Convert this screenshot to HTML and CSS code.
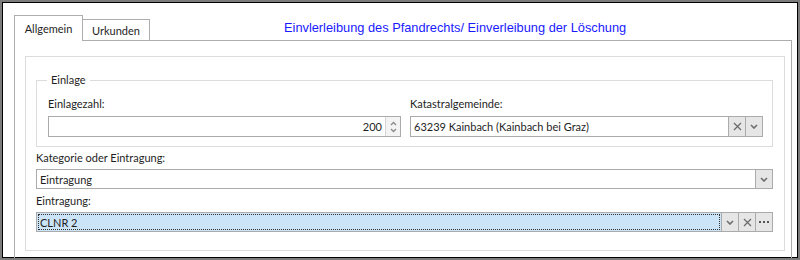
FILE: index.html
```html
<!doctype html>
<html lang="de">
  <head>
    <meta charset="UTF-8" />
    <title>Einverleibung</title>
    <link rel="stylesheet" href="styles.css">
  </head>
  <body>
    <div class="window">
      <div class="frame">
        <div class="tab-strip">
          <div class="tab tab-active">Allgemein</div>
          <div class="tab">Urkunden</div>
          <div class="title">Einvlerleibung des Pfandrechts/ Einverleibung der Löschung</div>
        </div>

        <div class="tab-page">
          <div class="panel">
            <fieldset class="group">
              <legend>Einlage</legend>
              <div class="group-row">
                <div class="field">
                  <label class="label">Einlagezahl:</label>
                  <div class="box">
                    <div class="box-text box-number">200</div>
                    <div class="spin">
                      <svg width="7" height="5" viewBox="0 0 7 5"><path d="M1 4 L3.5 1.5 L6 4" fill="none" stroke="#8a8a8a" stroke-width="1.3"/></svg>
                      <svg width="7" height="5" viewBox="0 0 7 5"><path d="M1 1 L3.5 3.5 L6 1" fill="none" stroke="#8a8a8a" stroke-width="1.3"/></svg>
                    </div>
                  </div>
                </div>
                <div class="field">
                  <label class="label">Katastralgemeinde:</label>
                  <div class="box">
                    <div class="box-text">63239 Kainbach (Kainbach bei Graz)</div>
                    <div class="btn">
                      <svg width="9" height="9" viewBox="0 0 9 9"><path d="M1 1 L8 8 M8 1 L1 8" stroke="#6d6d6d" stroke-width="1.3"/></svg>
                    </div>
                    <div class="btn">
                      <svg width="8" height="5" viewBox="0 0 8 5"><path d="M1 1 L4 4 L7 1" fill="none" stroke="#6d6d6d" stroke-width="1.6"/></svg>
                    </div>
                  </div>
                </div>
              </div>
            </fieldset>

            <label class="label label-wide">Kategorie oder Eintragung:</label>
            <div class="box box-combo">
              <div class="box-text">Eintragung</div>
              <div class="btn">
                <svg width="8" height="5" viewBox="0 0 8 5"><path d="M1 1 L4 4 L7 1" fill="none" stroke="#6d6d6d" stroke-width="1.6"/></svg>
              </div>
            </div>

            <label class="label label-wide">Eintragung:</label>
            <div class="box box-combo box-focus">
              <div class="box-text"><span class="focus-rect">CLNR 2</span></div>
              <div class="btn">
                <svg width="8" height="5" viewBox="0 0 8 5"><path d="M1 1 L4 4 L7 1" fill="none" stroke="#6d6d6d" stroke-width="1.6"/></svg>
              </div>
              <div class="btn">
                <svg width="9" height="9" viewBox="0 0 9 9"><path d="M1 1 L8 8 M8 1 L1 8" stroke="#6d6d6d" stroke-width="1.3"/></svg>
              </div>
              <div class="btn">
                <svg width="10" height="3" viewBox="0 0 10 3"><rect x="0" y="0" width="2" height="2" fill="#555"/><rect x="4" y="0" width="2" height="2" fill="#555"/><rect x="8" y="0" width="2" height="2" fill="#555"/></svg>
              </div>
            </div>
          </div>
        </div>
      </div>
    </div>
  </body>
</html>
```

FILE: styles.css
```css
body {
  margin: 0;
  background: #ffffff;
  font-family: Lato, "Open Sans", sans-serif;
  font-size: 11px;
  color: #1e1e1e;
}
.window {
  width: 800px;
  height: 260px;
  box-sizing: border-box;
  border: 2px solid #7c7c7c;
  overflow: hidden;
}
.frame {
  height: 100%;
  box-sizing: border-box;
  border: 1px solid #000000;
  background: #ffffff;
}

/* tab header */
.tab-strip {
  display: flex;
  align-items: flex-end;
  height: 37px;
  padding-left: 11px;
}
.tab {
  width: 66px;
  height: 20px;
  border: 1px solid #adadad;
  border-bottom: none;
  background: #ffffff;
  text-align: center;
  line-height: 22px;
  margin-left: -1px;
}
.tab-active {
  height: 24px;
  line-height: 25px;
  margin-left: 0;
  margin-bottom: -1px;
  position: relative;
  z-index: 1;
  width: 67px;
  padding-bottom: 1px;
}
.title {
  align-self: center;
  margin-left: 134px;
  margin-top: 11px;
  font-family: "Liberation Sans", Arial, sans-serif;
  font-size: 12.8px;
  color: #1a1aff;
}

/* tab page */
.tab-page {
  margin: 0 5px 0 11px;
  height: 260px;
  border: 1px solid #adadad;
  padding: 15px 6px 0 10px;
}
.panel {
  border: 1px solid #dcdcdc;
  padding: 15px 11px 18px 10px;
}

/* Einlage group */
.group {
  margin: 0 0 3px 0;
  border: 1px solid #dcdcdc;
  padding: 0 9px 9px 11px;
}
.group legend {
  padding: 0 4px;
  margin-left: -1px;
  line-height: 16px;
  color: #1e1e1e;
}
.group-row {
  display: flex;
  gap: 9px;
  padding-top: 8px;
}
.field {
  flex: 1;
}
.label {
  display: block;
  line-height: 16px;
  margin-bottom: 4px;
}
.label-wide {
  margin-bottom: 3px;
}

/* input boxes */
.box {
  display: flex;
  height: 21px;
  box-sizing: border-box;
  border: 1px solid #ababab;
  background: #ffffff;
}
.box-combo {
  height: 20px;
  margin-bottom: 4px;
}
.box-text {
  flex: 1;
  padding: 0 3px;
  line-height: 19px;
  white-space: nowrap;
  overflow: hidden;
}
.box-number {
  text-align: right;
}
.spin {
  width: 14px;
  display: flex;
  flex-direction: column;
  align-items: center;
  justify-content: center;
  gap: 2px;
  border-left: 1px solid #d5d5d5;
  background: #f4f4f4;
}
.btn {
  width: 16px;
  display: flex;
  align-items: center;
  justify-content: center;
  border-left: 1px solid #ababab;
  background: #e6e6e6;
}
.box-focus {
  background: #cce4f7;
  margin-bottom: 0;
}
.box-focus .box-text {
  padding: 1px;
}
.focus-rect {
  display: block;
  height: 16px;
  line-height: 15px;
  box-sizing: border-box;
  border: 1px dotted #303030;
  padding-left: 1px;
}
```
